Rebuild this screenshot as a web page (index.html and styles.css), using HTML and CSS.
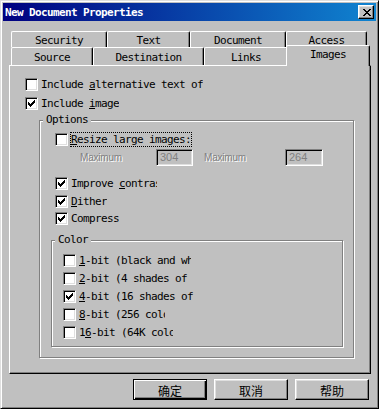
FILE: index.html
```html
<!DOCTYPE html>
<html>
<head>
<meta charset="utf-8">
<title>New Document Properties</title>
<link rel="stylesheet" href="styles.css">
</head>
<body>
<div class="window">
  <div class="titlebar">
    <span class="title">New Document Properties</span>
    <span class="close-btn"><svg width="8" height="7" viewBox="0 0 8 7" shape-rendering="crispEdges"><path d="M0 0h2v1H0zM6 0h2v1H6zM1 1h2v1H1zM5 1h2v1H5zM2 2h4v1H2zM3 3h2v1H3zM2 4h4v1H2zM1 5h2v1H1zM5 5h2v1H5zM0 6h2v1H0zM6 6h2v1H6z" fill="#000"/></svg></span>
  </div>
  <div class="body">
    <div class="tabs">
      <div class="tabrow back">
        <div class="tab t-security">Security</div>
        <div class="tab t-text">Text</div>
        <div class="tab t-document">Document</div>
        <div class="tab t-access">Access</div>
      </div>
      <div class="tabrow front">
        <div class="tab t-source">Source</div>
        <div class="tab t-destination">Destination</div>
        <div class="tab t-links">Links</div>
        <div class="tab t-images selected">Images</div>
      </div>
    </div>
    <div class="panel">
      <div class="row">
        <span class="cb"></span>
        <span class="lbl">Include <u>a</u>lternative text of</span>
      </div>
      <div class="row gap6">
        <span class="cb"><svg class="tick" width="7" height="7" viewBox="0 0 7 7" shape-rendering="crispEdges"><path d="M0 2h1v3H0zM1 3h1v3H1zM2 4h1v3H2zM3 3h1v3H3zM4 2h1v3H4zM5 1h1v3H5zM6 0h1v3H6z" fill="#000"/></svg></span>
        <span class="lbl">Include <u>i</u>mage</span>
      </div>
      <div class="group options">
        <span class="group-title">Options</span>
        <div class="row indent">
          <span class="cb"></span>
          <span class="lbl focus"><u>R</u>esize large images:</span>
        </div>
        <div class="maxrow">
          <span class="maxlbl">Maximum</span>
          <span class="field f-width">304</span>
          <span class="maxlbl second">Maximum</span>
          <span class="field f-height">264</span>
        </div>
        <div class="row indent gap11">
          <span class="cb"><svg class="tick" width="7" height="7" viewBox="0 0 7 7" shape-rendering="crispEdges"><path d="M0 2h1v3H0zM1 3h1v3H1zM2 4h1v3H2zM3 3h1v3H3zM4 2h1v3H4zM5 1h1v3H5zM6 0h1v3H6z" fill="#000"/></svg></span>
          <span class="lbl clip-contrast">Improve <u>c</u>ontrast</span>
        </div>
        <div class="row indent gap5">
          <span class="cb"><svg class="tick" width="7" height="7" viewBox="0 0 7 7" shape-rendering="crispEdges"><path d="M0 2h1v3H0zM1 3h1v3H1zM2 4h1v3H2zM3 3h1v3H3zM4 2h1v3H4zM5 1h1v3H5zM6 0h1v3H6z" fill="#000"/></svg></span>
          <span class="lbl"><u>D</u>ither</span>
        </div>
        <div class="row indent gap4">
          <span class="cb"><svg class="tick" width="7" height="7" viewBox="0 0 7 7" shape-rendering="crispEdges"><path d="M0 2h1v3H0zM1 3h1v3H1zM2 4h1v3H2zM3 3h1v3H3zM4 2h1v3H4zM5 1h1v3H5zM6 0h1v3H6z" fill="#000"/></svg></span>
          <span class="lbl">Compress</span>
        </div>
        <div class="group color">
          <span class="group-title">Color</span>
          <div class="row">
            <span class="cb"></span>
            <span class="lbl clip-1bit"><u>1</u>-bit (black and white)</span>
          </div>
          <div class="row gap5">
            <span class="cb"></span>
            <span class="lbl clip-2bit"><u>2</u>-bit (4 shades of gray)</span>
          </div>
          <div class="row gap5">
            <span class="cb"><svg class="tick" width="7" height="7" viewBox="0 0 7 7" shape-rendering="crispEdges"><path d="M0 2h1v3H0zM1 3h1v3H1zM2 4h1v3H2zM3 3h1v3H3zM4 2h1v3H4zM5 1h1v3H5zM6 0h1v3H6z" fill="#000"/></svg></span>
            <span class="lbl clip-4bit"><u>4</u>-bit (16 shades of gray)</span>
          </div>
          <div class="row gap5">
            <span class="cb"></span>
            <span class="lbl clip-8bit"><u>8</u>-bit (256 colors)</span>
          </div>
          <div class="row gap5">
            <span class="cb"></span>
            <span class="lbl clip-16bit">1<u>6</u>-bit (64K colors)</span>
          </div>
        </div>
      </div>
    </div>
    <div class="buttons">
      <span class="btn default">确定</span>
      <span class="btn">取消</span>
      <span class="btn">帮助</span>
    </div>
  </div>
</div>
</body>
</html>
```
FILE: styles.css
```css
html, body {
  margin: 0;
  padding: 0;
  background: #c0c0c0;
}

body {
  font-family: "DejaVu Sans Mono", monospace;
  font-size: 11px;
  letter-spacing: -0.62px;
  color: #000;
}

.window {
  box-sizing: border-box;
  width: 379px;
  height: 409px;
  border: 1px solid;
  border-color: #dfdfdf #000 #000 #dfdfdf;
  box-shadow: inset 1px 1px 0 #fff, inset -1px -1px 0 #808080;
  padding: 2px;
  background: #c0c0c0;
  display: flex;
  flex-direction: column;
}

/* Title bar */
.titlebar {
  height: 18px;
  flex: none;
  display: flex;
  align-items: center;
  justify-content: space-between;
  padding: 0 2px;
  background: linear-gradient(to right, #000080, #1084d0);
}

.title {
  color: #fff;
  font-weight: bold;
  line-height: 18px;
  padding-top: 1px;
}

.close-btn {
  box-sizing: border-box;
  width: 16px;
  height: 14px;
  background: #c0c0c0;
  border: 1px solid;
  border-color: #fff #000 #000 #fff;
  box-shadow: inset -1px -1px 0 #808080, inset 1px 1px 0 #dfdfdf;
  display: flex;
  align-items: center;
  justify-content: center;
  padding-left: 1px;
}

.close-btn svg {
  display: block;
}

/* Body */
.body {
  flex: 1;
  padding: 10px 5px 0 6px;
  display: flex;
  flex-direction: column;
}

/* Tabs */
.tabrow {
  display: flex;
  align-items: flex-start;
  padding-left: 2px;
}

.tabrow.back {
  height: 16px;
}

.tabrow.front {
  height: 18px;
}

.tab {
  box-sizing: border-box;
  flex: none;
  border-top: 1px solid #fff;
  border-left: 1px solid #fff;
  border-right: 1px solid #000;
  box-shadow: inset -1px 0 0 #808080;
  border-radius: 2px 2px 0 0;
  background: #c0c0c0;
  display: flex;
  align-items: center;
  justify-content: center;
  white-space: nowrap;
}

.back .tab {
  height: 16px;
  padding-top: 1px;
}

.front .tab {
  height: 18px;
  padding-top: 1px;
}

.front .tab.selected {
  height: 21px;
  margin: -2px -2px -1px -2px;
  padding: 0 0 3px 0;
  position: relative;
  z-index: 1;
}

.t-security { width: 96px; }
.t-text { width: 83px; }
.t-document { width: 96px; }
.t-access { width: 81px; }
.t-source { width: 82px; }
.t-destination { width: 111px; }
.t-links { width: 84px; }
.t-images { width: 84px; }

/* Panel */
.panel {
  box-sizing: border-box;
  width: 362px;
  height: 309px;
  flex: none;
  border: 1px solid;
  border-color: #fff #000 #000 #fff;
  box-shadow: inset -1px -1px 0 #808080;
  padding: 12px 0 0 15px;
}

/* Rows */
.row {
  display: flex;
  align-items: center;
  height: 13px;
}

.row.indent { margin-left: 4px; }
.row.gap4 { margin-top: 4px; }
.row.gap5 { margin-top: 5px; }
.row.gap6 { margin-top: 6px; }
.row.gap11 { margin-top: 11px; }

.cb {
  box-sizing: border-box;
  flex: none;
  width: 13px;
  height: 13px;
  border: 1px solid;
  border-color: #808080 #fff #fff #808080;
  box-shadow: inset 1px 1px 0 #000, inset -1px -1px 0 #dfdfdf;
  background: #fff;
  padding: 2px;
}

.tick {
  display: block;
}

.lbl {
  margin-left: 3px;
  line-height: 13px;
  height: 13px;
  white-space: nowrap;
  overflow: hidden;
}

.lbl u {
  text-underline-offset: 1px;
}

.lbl.focus {
  outline: 1px dotted #000;
  overflow: visible;
}

.clip-contrast { width: 86px; }
.clip-1bit { width: 112px; }
.clip-2bit { width: 112px; }
.clip-4bit { width: 115px; }
.clip-8bit { width: 86px; }
.clip-16bit { width: 94px; }

/* Maximum row */
.maxrow {
  display: flex;
  align-items: center;
  height: 17px;
  margin: 3px 0 0 29px;
}

.maxlbl {
  width: 76px;
  flex: none;
  font-family: "Liberation Sans", Arial, sans-serif;
  font-size: 10px;
  letter-spacing: -0.2px;
  color: #808080;
  text-shadow: 1px 1px 0 #fff;
}

.maxlbl.second {
  width: 81px;
  margin-left: 11px;
}

.field {
  box-sizing: border-box;
  flex: none;
  height: 17px;
  border: 1px solid;
  border-color: #808080 #fff #fff #808080;
  box-shadow: inset 1px 1px 0 #000, inset -1px -1px 0 #dfdfdf;
  background: #c0c0c0;
  color: #808080;
  font-family: "Liberation Sans", Arial, sans-serif;
  font-size: 11px;
  letter-spacing: 0;
  line-height: 14px;
  padding: 0 0 0 3px;
}

.f-width { width: 37px; }
.f-height { width: 38px; }

/* Group boxes */
.group {
  position: relative;
  box-sizing: border-box;
  border: 1px solid #808080;
  box-shadow: inset 1px 1px 0 #fff, 1px 1px 0 #fff;
}

.group-title {
  position: absolute;
  top: -7px;
  left: 3px;
  padding: 0 3px;
  line-height: 12px;
  background: #c0c0c0;
}

.options {
  width: 315px;
  height: 238px;
  margin: 10px 0 0 14px;
  padding: 12px 0 0 11px;
}

.color {
  width: 292px;
  height: 107px;
  margin-top: 15px;
  padding: 13px 0 0 11px;
}

/* Buttons */
.buttons {
  display: flex;
  justify-content: flex-end;
  gap: 7px;
  margin-top: 5px;
  padding-right: 2px;
}

.btn {
  box-sizing: border-box;
  width: 74px;
  height: 21px;
  border: 1px solid;
  border-color: #fff #000 #000 #fff;
  box-shadow: inset -1px -1px 0 #808080, inset 1px 1px 0 #dfdfdf;
  font-family: "Noto Sans CJK SC", sans-serif;
  font-size: 12px;
  letter-spacing: 0;
  display: flex;
  align-items: center;
  justify-content: center;
  padding-top: 1px;
}

.btn.default {
  border-color: #000;
  box-shadow: inset 1px 1px 0 #fff, inset -1px -1px 0 #000, inset -2px -2px 0 #808080;
}
```
